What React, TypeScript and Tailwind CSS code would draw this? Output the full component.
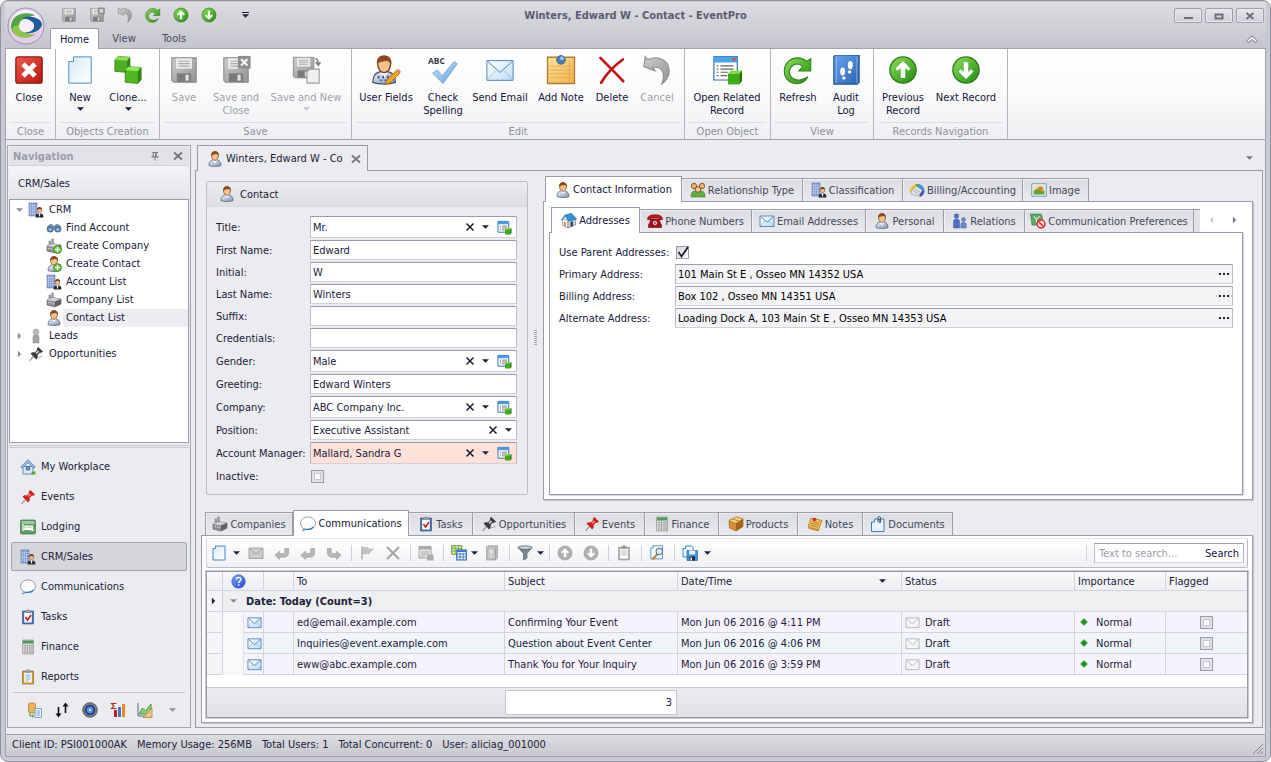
import type { ReactNode } from 'react';

/* ---------- Icon artwork, drawn on a 16 unit grid ---------- */
const person = (
  <g>
    <path d="M2 14.600c0-3.400 1.500-5.100 3.600-5.600h4.800c2.100.5 3.600 2.200 3.600 5.600-3 1.200-9 1.200-12 0z" fill="url(#shirt)" stroke="#46556f" strokeWidth=".7" />
    <path d="M6 9l2 3.500L10 9z" fill="#fbfcfd" />
    <path d="M4.500 4c0-2 1.500-3.400 3.500-3.400S11.500 2 11.500 4c0 3-1.400 5.400-3.500 5.400S4.500 7 4.500 4z" fill="#f3c08e" stroke="#7b4420" strokeWidth=".7" />
    <path d="M4.200 5C3.800 2 5.400.3 8 .3s4.200 1.700 3.800 4.700C11 4.200 10.600 3.400 9.600 3 8 3.600 5.400 3 4.200 5z" fill="#8a4b20" />
  </g>
);
const plus = (
  <g>
    <circle cx="11.500" cy="11.500" r="4" fill="#5cb82c" stroke="#3d8a16" strokeWidth=".6" />
    <path d="M11.500 9v5M9 11.500h5" stroke="#fff" strokeWidth="1.600" />
  </g>
);
const factory = (
  <g>
    <path d="M1 8l5-2.500 9 1.500v5l-6 3-8-2z" fill="#8d8f93" stroke="#55575b" strokeWidth=".6" />
    <path d="M1 8l5-2.500L15 7l-6 2.500z" fill="#cfd1d4" />
    <path d="M9 9.500V15l6-3V7z" fill="#5f6165" />
    <path d="M3 7V3h1.500v3.500M5.800 6V1h1.500v5" fill="#a3a5a9" stroke="#66686c" strokeWidth=".5" />
    <path d="M2.500 10.500h1.300M5 11h1.300M7.300 11.500h.8" stroke="#e8e8ea" />
  </g>
);
const building = (
  <g>
    <path d="M1 1h8v13H1z" fill="#7f98cb" stroke="#5a73a9" strokeWidth=".6" />
    <path d="M2.500 1.500v12M4.500 1.500v12M6.500 1.500v12M1 3.500h8M1 6h8M1 8.500h8M1 11h8" stroke="#c3d2ee" strokeWidth=".6" />
    <path d="M7.500 15.500c0-3 1.200-4.300 4-4.300s4 1.300 4 4.300z" fill="#2c2c30" />
    <path d="M10.400 11.200h2.200l-1.100 4z" fill="#fff" />
    <circle cx="11.500" cy="8.200" r="2.400" fill="#f3c08e" stroke="#7b4420" strokeWidth=".5" />
    <path d="M9 8c0-2 1-3 2.500-3s2.500 1 2.500 3c-1-1.300-3.500-1.500-5 0z" fill="#6d3f1d" />
  </g>
);
const calculator = (
  <g>
    <path d="M2.500 1h11v14h-11z" fill="#d4d6d6" stroke="#9a9d9d" strokeWidth=".8" />
    <path d="M3 1.500h10v3H3z" fill="#4c9a59" />
    <path d="M5 6v8M7.500 6v8M10 6v8M12 6v8" stroke="#7f8282" strokeWidth="1.100" strokeDasharray="1.200 1" />
  </g>
);
const clipboard = (board: string, rim: string, mark: ReactNode) => (
  <g>
    <path d="M2.500 2h11v13h-11z" fill={board} stroke={rim} strokeWidth=".6" />
    <path d="M4.200 3.500h7.600v10H4.200z" fill="#fff" />
    <path d="M5.500 3.500V2h1.300l.5-1.300h1.400L9.200 2h1.300v1.500z" fill="#9ea3ac" stroke="#74787f" strokeWidth=".5" />
    {mark}
  </g>
);
const pin = (dark: string, light: string) => (
  <g>
    <path d="M5.500 10.500L1.500 14.800" stroke="#9a9a9a" strokeWidth="1.200" />
    <path d="M2.500 7.500c1.500-1.400 3-1.500 4.200-1L9 4.200c-.4-1.300 0-2.500 1.200-3.300L15 5.500c-1 1.200-2.200 1.500-3.400 1.200L9.500 9.200c.6 1.500.2 2.900-1.300 4.200z" fill={dark} />
    <path d="M7.500 7l2.300-2.600L11.200 5.500 8.800 8z" fill={light} />
  </g>
);
const envelope = (fill: string, line: string, weight: number) => (
  <g>
    <path d="M1 3h14v10.500H1z" fill={fill} stroke={line} strokeWidth={weight} />
    <path d="M1.500 3.500L8 9.300l6.500-5.800" fill="none" stroke={line} strokeWidth={weight} />
    <path d="M1.500 13l4.700-5.200M14.500 13L9.800 7.800" fill="none" stroke={line} strokeWidth={weight * 0.6} opacity=".6" />
  </g>
);
const floppy = (
  <g>
    <path d="M1.500 1.500h13v13h-12l-1-1z" fill="url(#silver)" stroke="#8c8c8c" strokeWidth=".6" />
    <path d="M3.800 1.800h8.400v5.500H3.800z" fill="#ececec" />
    <path d="M5 3.300h6M5 4.600h6M5 5.900h6" stroke="#a8a8a8" strokeWidth=".6" />
    <path d="M4.200 9.800h7.600v4.500H4.200z" fill="#7b7b7b" />
    <path d="M8.800 10.500h1.700v3.200H8.800z" fill="#e0e0e0" />
  </g>
);
const record = (
  <g>
    <path d="M1 1.500h11.500V13H1z" fill="#fff" stroke="#2a6ab4" />
    <path d="M1 1.500h11.500v3H1z" fill="#4a9be6" />
    <path d="M3 6.500h1.200M5.300 6.500h5.500M3 8.500h1.200M5.300 8.500h5.500M3 10.500h1.200M5.300 10.500h3" stroke="#555" strokeWidth=".8" />
    <path d="M8.500 10l1.500-1.500h5.500L14 10z" fill="#7edb4a" />
    <path d="M8.500 10H14v5.500H8.500z" fill="#3fae16" />
    <path d="M14 10l1.500-1.500V14L14 15.500z" fill="#23750a" />
  </g>
);
const arrowBall = (up: boolean, fill: string, rim: string) => (
  <g>
    <circle cx="8" cy="8" r="7" fill={fill} stroke={rim} strokeWidth=".7" />
    <path
      d={up ? 'M8 3.200l4 4-1.200 1.200-1.600-1.500v5.300H6.800V6.900L5.200 8.400 4 7.200z' : 'M8 12.800l4-4-1.200-1.200-1.600 1.500V3.800H6.800v5.300L5.200 7.600 4 8.800z'}
      fill="#fff"
    />
  </g>
);
const reply = <path d="M.8 10.300L5.500 6.200v2.300H9c1.200 0 1.800-.6 1.800-1.700V3.500h3.700v4.300c0 3-1.700 4.400-4.500 4.400H5.500v2.200z" fill="#b8b8b8" stroke="#979797" strokeWidth=".6" />;
const page = (weight: number) => (
  <path d="M4.500 1h9.500v14H2V3.500h2.500z" fill="url(#paper)" stroke="#4a84c4" strokeWidth={weight} strokeLinejoin="round" />
);

const art: Record<string, ReactNode> = {
  person,
  building,
  factory,
  calculator,
  floppy,
  record,
  reply,
  replyAll: reply,
  forward: <g transform="translate(16 0) scale(-1 1)">{reply}</g>,
  undo: <path d="M1 6.200L1.700.9 3 2.400C7 .5 14.500 1.500 14.500 8.300c0 3.200-1.500 5.500-4 7.200 1.600-3.500 1.700-9.800-4.800-8.900L7 8.400z" fill="url(#silver)" stroke="#8f8f8f" strokeWidth=".6" />,
  refresh: <path d="M13.300 11.600C12 14 10 15.300 7.500 15.300 3.500 15.300.7 12.400.7 8.600.7 4.600 3.800 1.500 7.800 1.500c2 0 3.500.7 4.600 1.900L14.800 2v6.500H8.500l2-2.300C9 4.700 7 4.500 5.400 5.500 2.800 7.200 2.800 10.600 5 12.300c2.300 1.800 5.700 1.300 8.300-.7z" fill="url(#greenBall)" stroke="#2e8318" strokeWidth=".6" />,
  page: page(1),
  pageLarge: page(0.5),
  personPlus: <g>{person}{plus}</g>,
  factoryPlus: <g>{factory}{plus}</g>,
  floppyX: (
    <g>
      {floppy}
      <path d="M9 .5h6.800v6.800H9z" fill="#8e8e8e" />
      <path d="M10.700 2.200l3.400 3.400M14.100 2.200l-3.400 3.400" stroke="#f2f2f2" strokeWidth="1.200" />
    </g>
  ),
  floppyNew: (
    <g>
      <g transform="scale(.84)">{floppy}</g>
      <path d="M10 7.500h5V15H8.500V9z" fill="#f0f0f0" stroke="#9a9a9a" strokeWidth=".6" />
      <path d="M13 1.800c1.300.4 1.500 1.500 1.500 3M13.200 3.800l1.300 1.700 1.200-1.700" fill="none" stroke="#777" strokeWidth=".8" />
    </g>
  ),
  up: arrowBall(true, 'url(#greenBall)', '#2a7a12'),
  down: arrowBall(false, 'url(#greenBall)', '#2a7a12'),
  upGray: arrowBall(true, '#b0b0b0', '#999999'),
  downGray: arrowBall(false, '#b0b0b0', '#999999'),
  closeRed: (
    <g>
      <rect x="1" y="1" width="14" height="14" rx="1.200" fill="url(#redBox)" stroke="#8f1710" strokeWidth=".7" />
      <path d="M4.800 4.800l6.400 6.400M11.200 4.800l-6.400 6.400" stroke="#fff" strokeWidth="2.600" />
    </g>
  ),
  cubes: (
    <g strokeLinejoin="round">
      <path d="M1 2.500L2.800.8 9 1.200v6.300L7.500 9.300 1 8.700z" fill="#4fae24" stroke="#2d7d10" strokeWidth=".4" />
      <path d="M1 2.500L2.800.8 9 1.200 7.600 3z" fill="#8fe052" />
      <path d="M7.600 3L9 1.200v6.300L7.500 9.300z" fill="#2f8a10" />
      <path d="M6.500 8l1.700-1.800 6.800.5v6.400l-1.800 2.100-6.700-.7z" fill="#4fb822" stroke="#2d7d10" strokeWidth=".4" />
      <path d="M6.500 8l1.700-1.800 6.800.5-1.800 2z" fill="#98e65c" />
      <path d="M13.200 8.700l1.800-2v6.400l-1.800 2.100z" fill="#2f8a10" />
    </g>
  ),
  userFields: (
    <g>
      <g transform="translate(-1 0)">{person}</g>
      <path d="M4 11v1.500M6.500 11v1.500M9 11v1.500M5.200 13v1M7.700 13v1" stroke="#3e55a0" strokeWidth=".9" />
      <path d="M7.500 15.700l1-2.500L13.800 8l1.700 1.600-5.300 5.300z" fill="#f6a521" stroke="#a8650d" strokeWidth=".4" />
      <path d="M13.800 8l.8-.7 1.400 1.600-.5.700z" fill="#e67f7f" />
    </g>
  ),
  spelling: (
    <g>
      <path d="M2.500 9.700L5 8l2.500 3.200L14 3.400l1.600 1.300L8 15.200z" fill="url(#blueCheck)" stroke="#5f97cc" strokeWidth=".4" />
      <text x="0" y="5" fontSize="4.500" fontWeight="700" fontFamily="Open Sans, sans-serif" fill="#3b3b44">ABC</text>
    </g>
  ),
  envelope: envelope('url(#sky)', '#4a7fb8', 0.9),
  envelopeLarge: envelope('url(#sky)', '#4a7fb8', 0.5),
  envelopeGray: envelope('#cfcfcf', '#9e9e9e', 0.9),
  envelopePale: envelope('#f8f8f8', '#b0b0b4', 0.9),
  note: (
    <g>
      <path d="M.8 1.200h14.400v14H.8z" fill="url(#noteFill)" stroke="#b47a32" strokeWidth=".7" />
      <path d="M1.500 6h13M1.500 8h13M1.500 10h13M1.500 12h13M12.500 3v12" stroke="#dba64d" strokeWidth=".4" />
      <circle cx="8" cy="2.600" r="2.300" fill="#4a80b8" stroke="#2a5788" strokeWidth=".4" />
      <circle cx="8.500" cy="1.700" r="1" fill="#9cc3e4" />
    </g>
  ),
  deleteX: <path d="M1.800 1.500c4 4 8 8 12.200 12.500M13.800 2.400C9.500 5.500 5 10 2.200 14.800" stroke="#c0140f" strokeWidth="1.400" strokeLinecap="round" />,
  deleteGray: <path d="M2 2l12 12M14 2L2 14" stroke="#a5a5a5" strokeWidth="2" />,
  relatedRecord: (
    <g>
      <path d="M1 .8h12.500v12.500H1z" fill="#fff" stroke="#2a6ab4" strokeWidth=".6" />
      <path d="M1 .8h12.500V4H1z" fill="#4ba3ee" />
      <path d="M11 1.600h1.500v1.500H11z" fill="#e0442a" />
      <path d="M2.500 5.800h1M4.500 5.800h7M2.500 7.500h1M4.500 7.500h7M2.500 9.200h1M4.500 9.200h4M2.500 11h1M4.500 11h3.500" stroke="#666" strokeWidth=".6" />
      <path d="M8.500 10L10 8.200h6L14.500 10z" fill="#7edb4a" />
      <path d="M8.500 10h6v5.700h-6z" fill="#3fae16" />
      <path d="M14.500 10L16 8.200v5.600l-1.500 1.900z" fill="#23750a" />
    </g>
  ),
  audit: (
    <g>
      <path d="M1.500.8L2.500 0H15v14.500l-1 1H1.500z" fill="url(#bookBlue)" stroke="#1f4f92" strokeWidth=".6" />
      <path d="M2.800 1v14M13.800 1v14" stroke="#9cc2ee" strokeWidth=".4" />
      <ellipse cx="6.200" cy="8.800" rx="1.300" ry="2.200" fill="#fff" />
      <ellipse cx="10.300" cy="5.400" rx="1.300" ry="2.200" fill="#fff" />
      <circle cx="6.900" cy="12.300" r=".9" fill="#fff" />
      <circle cx="9.900" cy="9" r=".9" fill="#fff" />
    </g>
  ),
  binoculars: (
    <g stroke="#3f5d88" strokeWidth=".5">
      <path d="M2 6l3-2 2 1.500v1h2v-1L11 4l3 2 1 3.500H1z" fill="#7d9cc6" />
      <circle cx="4.200" cy="9" r="3.200" fill="#5a82b8" />
      <circle cx="11.800" cy="9" r="3.200" fill="#5a82b8" />
      <circle cx="4.200" cy="9.500" r="1.600" fill="#bcd9f5" />
      <circle cx="11.800" cy="9.500" r="1.600" fill="#bcd9f5" />
    </g>
  ),
  lead: (
    <g fill="#a5a5a5" stroke="#8a8a8a" strokeWidth=".5">
      <path d="M5 15V9c0-1.500 1-2.200 3-2.200s3 .7 3 2.200v6z" />
      <circle cx="8" cy="3.800" r="2.800" fill="#bcbcbc" />
    </g>
  ),
  pinBlack: <g>{pin('#3a3c40', '#d6d9dc')}<path d="M9.500 11.500l5-.8" stroke="#aaa" /></g>,
  pinRed: pin('#cf1f1c', '#ff8a80'),
  home: (
    <g>
      <path d="M3 7.500h10V15H3z" fill="#dfe9f4" stroke="#3c6594" strokeWidth=".7" />
      <path d="M8 .8L.8 8l1.400 1.200L8 3.700l5.800 5.500L15.200 8z" fill="#a9c9ea" stroke="#2f5c94" strokeWidth=".7" />
      <path d="M6.200 7.500h3.600V11H6.200z" fill="#5b93d0" stroke="#2b5690" strokeWidth=".6" />
      <path d="M11.500 12.500h4v3h-4z" fill="#5ba93a" />
    </g>
  ),
  bed: (
    <g>
      <rect x=".5" y="1" width="15" height="14" rx="1.200" fill="#5e9c64" stroke="#3e7547" strokeWidth=".7" />
      <path d="M1.500 2h13v3h-13z" fill="#9cc79f" />
      <path d="M3 5v7M3 10.500h10v1.500M5 7h7.500v2.500H5z" stroke="#fff" strokeWidth="1.200" fill="#c5e0c8" />
    </g>
  ),
  bubble: (
    <g>
      <path d="M8 1C3.800 1 .6 3.700.6 7.300c0 2.200 1 3.900 2.800 5-.1 1-.6 1.900-1.300 2.700 1.700-.2 3-.8 4-1.700 5 .8 9.300-1.700 9.300-6C15.400 3.700 12.200 1 8 1z" fill="#fdfdfe" stroke="#7d8794" strokeWidth=".8" />
      <path d="M3.500 12.800c2 .8 7.500 1.300 10-2" stroke="#2c78c8" strokeWidth="1.100" fill="none" />
    </g>
  ),
  tasks: clipboard('#3f6fb0', '#3a4e78', <path d="M5.500 8l2 3 3.500-5" stroke="#c9201c" strokeWidth="1.700" fill="none" />),
  reports: clipboard('#d9972a', '#8d6320', <path d="M5.500 6h5M5.500 8h5M5.500 10h5M5.500 12h3" stroke="#5b86c0" strokeWidth=".8" />),
  clipGray: clipboard('#b0b0b0', '#9a9a9a', <path d="M5.500 6h5M5.500 8h5M5.500 10h5" stroke="#b0b0b0" />),
  database: (
    <g>
      <path d="M1.500 2c0-1.300 7-1.300 7 0v8c0 1.200-7 1.200-7 0z" fill="#efb457" stroke="#a96d1b" strokeWidth=".7" />
      <path d="M8 6.500h6.500v9H8z" fill="#eaf2fb" stroke="#4a84c4" strokeWidth=".7" />
      <path d="M9.500 9h3.500M9.500 11h3.500M9.500 13h3.500" stroke="#4a84c4" strokeWidth=".7" />
      <path d="M3 11v3h3.500M5.200 12.500L6.800 14l-1.600 1.500" fill="none" stroke="#2d8d1c" strokeWidth=".9" />
    </g>
  ),
  swap: (
    <g>
      <path d="M4.500 5v8M11.500 11V3" stroke="#111" strokeWidth="1.600" />
      <path d="M1.500 11.500h6l-3 4zM8.500 4.500h6l-3-4z" fill="#111" />
    </g>
  ),
  camera: (
    <g>
      <circle cx="8" cy="8" r="7.300" fill="#7d828a" stroke="#33363b" strokeWidth=".7" />
      <circle cx="8" cy="8" r="5.200" fill="#1d3d7c" />
      <circle cx="8" cy="8" r="3.400" fill="#4f8be0" />
      <circle cx="8" cy="8" r="1.200" fill="#cfe6ff" />
    </g>
  ),
  sigma: (
    <g>
      <path d="M6.500 1.500H1.500L4 4 1.500 6.500h5" fill="none" stroke="#c0201a" strokeWidth="1.100" />
      <path d="M4 8h3v7H4z" fill="#c0201a" />
      <path d="M8 5h3v10H8z" fill="#3f76c6" />
      <path d="M12 2h3v13h-3z" fill="#f08a1c" />
    </g>
  ),
  chart: (
    <g>
      <path d="M1 1v13h14" stroke="#4d6f8e" fill="none" />
      <path d="M2 12l3.500-6 3 3L14 2v10z" fill="#8fce7a" stroke="#2d8d1c" strokeWidth=".8" />
      <path d="M15 6v9.500H6z" fill="#f2cf8a" stroke="#a8741f" strokeWidth=".7" />
      <path d="M13 10.500V14H9.800z" fill="#fff" stroke="#a8741f" strokeWidth=".4" />
    </g>
  ),
  people: (
    <g>
      <path d="M1 15c0-3 .8-6 3.500-6h7c2.700 0 3.500 3 3.500 6z" fill="#62ad44" stroke="#3c7a25" strokeWidth=".6" />
      <circle cx="4" cy="4" r="2.600" fill="#e9b683" stroke="#8a5426" strokeWidth="1" />
      <circle cx="12" cy="4" r="2.600" fill="#e9b683" stroke="#8a5426" strokeWidth="1" />
      <circle cx="8" cy="7.500" r="2.800" fill="#f3c793" stroke="#8a5426" strokeWidth="1" />
    </g>
  ),
  billing: (
    <g>
      <path d="M.5 10.500C1 5.500 4 2.200 8.500 2L9 6z" fill="#f7c21c" />
      <path d="M8.500 2c4 .2 7 3 7 6.500L9 7z" fill="#3f94dd" />
      <path d="M9 7l6.500 1.500c0 3-1.500 5.200-4 6z" fill="#2b62c8" />
      <path d="M6 3c1-.7 2-1 3-1l.8 3z" fill="#3f9c2f" />
      <path d="M10.500 11l2 3-2 1z" fill="#d8261c" />
      <path d="M2 9.500L7 4l6.500 4.200-4.500 6.300L2 12z" fill="#dfe3e9" stroke="#8c929c" strokeWidth=".6" />
      <path d="M4.500 9l5 3M6 7.200l5 3" stroke="#9aa1ac" strokeWidth=".8" />
    </g>
  ),
  picture: (
    <g>
      <path d="M.8 1.800h14.400v12.400H.8z" fill="#f5faff" stroke="#4a7fc0" strokeWidth=".8" />
      <path d="M2.500 3.500h11v9h-11z" fill="#f4dc8e" />
      <path d="M2.500 9l4-2.500 3.500 3 3.500-1v4h-11z" fill="#64a43c" />
      <circle cx="9.500" cy="7" r="2.300" fill="#d8862a" stroke="#85501a" strokeWidth=".6" strokeDasharray="1 .6" />
    </g>
  ),
  house: (
    <g>
      <path d="M1.500 6l5.500 1v8l-5.500-2.500z" fill="#f6f7f9" stroke="#70757d" strokeWidth=".6" />
      <path d="M7 7l7.500-1.500V12L7 15z" fill="#c9ced6" stroke="#70757d" strokeWidth=".6" />
      <path d="M.3 7.200L4 2l6.500-1.700L15.700 6 8 8.200 4.500 3.600z" fill="#2f8fd8" stroke="#1a5f9c" strokeWidth=".5" />
      <path d="M3 9h1.800v4.500L3 12.700z" fill="#d48a2a" />
      <path d="M9.500 9l2.500-.7v4.700l-2.500 1z" fill="#3e4247" />
    </g>
  ),
  phone: (
    <g>
      <path d="M.5 6.500C.5 3 3.500 1.800 8 1.800S15.500 3 15.500 6.500L12 7.200V5H4v2.200z" fill="#c4161c" stroke="#6e0a0d" strokeWidth=".6" />
      <path d="M4.500 6h7l3 6v2.500h-13V12z" fill="#a80f15" stroke="#6e0a0d" strokeWidth=".6" />
      <circle cx="8" cy="10" r="2.400" fill="#fff" stroke="#5c0b0e" strokeWidth=".7" />
      <circle cx="8" cy="10" r=".9" fill="#a80f15" />
    </g>
  ),
  relations: (
    <g fill="#4d6fc6" stroke="#2f4a9c" strokeWidth=".4">
      <circle cx="4.500" cy="3" r="2.300" />
      <path d="M1.500 15V8.500C1.500 6.800 2.500 6 4.500 6s3 .8 3 2.500V15z" />
      <circle cx="11.500" cy="6.500" r="2" fill="#6a88d8" />
      <path d="M8.800 15v-3.500c0-1.500 1-2.200 2.700-2.200s2.700.7 2.700 2.200V15z" fill="#6a88d8" />
    </g>
  ),
  commPrefs: (
    <g>
      <path d="M.5 1h10.500l1.500 4-2 7H2z" fill="#5fa868" stroke="#2f6f3a" strokeWidth=".6" />
      <path d="M4 3.500l2.500 3 3-3.500M6.500 6.500V10" stroke="#dff2e0" strokeWidth="1.100" fill="none" />
      <circle cx="11" cy="11" r="4" fill="#fbe3e4" stroke="#dc1f26" strokeWidth="1.400" />
      <path d="M8.200 8.200l5.600 5.600" stroke="#dc1f26" strokeWidth="1.400" />
    </g>
  ),
  box: (
    <g strokeLinejoin="round">
      <path d="M1 4.500L8.500 1 15 3v7.500L8 15l-6.500-3z" fill="#d68f2c" stroke="#8c5511" strokeWidth=".6" />
      <path d="M1 4.500L8.500 1 15 3 8 7.300z" fill="#f8d58a" stroke="#8c5511" strokeWidth=".4" />
      <path d="M8 7.300L15 3v7.500L8 15z" fill="#a9661a" />
      <path d="M4.500 3l7 2.200v2" stroke="#c17c1f" fill="none" />
    </g>
  ),
  notes: (
    <g>
      <path d="M4 2l11 2.500L11.500 14 1 11z" fill="#eebb58" stroke="#a3701f" strokeWidth=".7" />
      <path d="M1 11l10.500 3 .3 1.500L2 13z" fill="#c88d31" />
      <path d="M4.800 5.500l7.500 1.800M4.200 7.300l7.500 2M3.500 9.200l7 2" stroke="#a3701f" strokeWidth=".7" />
      <circle cx="7.500" cy="3.500" r="1.800" fill="#c4302a" />
    </g>
  ),
  document: (
    <g>
      <path d="M4.500 3H14v12.500H1.500V6h3z" fill="#eaf4fd" stroke="#3a7cc0" strokeLinejoin="round" />
      <path d="M8 6V1.500c0-1.300 2.600-1.300 2.600 0V6c0 1-1.500 1-1.500 0V3" fill="none" stroke="#33475e" strokeWidth=".9" />
    </g>
  ),
  flag: (
    <g>
      <path d="M3 1.500v13" stroke="#a5a5a5" strokeWidth="1.300" />
      <path d="M4 2.500h4.500L10 4h4.500L12 6.200l-2 2.500H4z" fill="#c2c2c2" stroke="#a8a8a8" strokeWidth=".5" />
    </g>
  ),
  recordGray: (
    <g>
      <path d="M1 1.500h12V13H1z" fill="#e4e4e4" stroke="#a2a2a2" />
      <path d="M1 1.500h12v3H1z" fill="#adadad" />
      <path d="M3 7h8M3 9h8M3 11h4" stroke="#a2a2a2" strokeWidth=".8" />
      <path d="M9 9.500h6.500v6H9z" fill="#adadad" />
    </g>
  ),
  tables: (
    <g>
      <path d="M.8.8h10v8.500h-10z" fill="#e9f5d8" stroke="#5c9c1e" strokeWidth="1.100" />
      <path d="M1 3.300h10M4 1v8M7.500 1v8M1 6h10" stroke="#5c9c1e" strokeWidth=".8" />
      <path d="M5.800 5h9.500v10H5.800z" fill="#e3effb" stroke="#2a66b4" strokeWidth="1.100" />
      <path d="M6 9h9M6 12h9M9 8v7M12.200 8v7" stroke="#2a66b4" strokeWidth=".7" />
      <path d="M6 5h9v2H6z" fill="#3b7cc8" />
    </g>
  ),
  bookGray: (
    <g>
      <path d="M2.500 2l2-1.300h9V13l-2 2h-9z" fill="#bcbcbc" stroke="#9f9f9f" strokeWidth=".7" />
      <path d="M5 4h4.500v8H5z" stroke="#e8e8e8" strokeWidth=".6" />
      <path d="M7.200 5v4M7.200 10v1.300" stroke="#fff" strokeWidth="1.400" />
      <path d="M11.500 3v12" stroke="#979797" strokeWidth=".7" />
    </g>
  ),
  funnel: (
    <g>
      <path d="M1 2.500l5.500 6V15l3.500-1.700V8.500L15 2.500z" fill="#7d8895" stroke="#4a535e" strokeWidth=".6" />
      <ellipse cx="8" cy="2.600" rx="7" ry="1.800" fill="#c8d4e0" stroke="#4a535e" strokeWidth=".7" />
    </g>
  ),
  preview: (
    <g>
      <path d="M4 .8h9.500v13H1.800V3H4z" fill="#f2f8fe" stroke="#3a7cc0" strokeWidth=".8" />
      <path d="M8.200 9.200L3.500 14.500" stroke="#c58a2c" strokeWidth="2.200" />
      <circle cx="10.300" cy="6.500" r="3.300" fill="#d6ebfb" stroke="#55606e" />
    </g>
  ),
  exportFile: (
    <g>
      <path d="M1 3.500h2.500V1h6l1.500 1.500V12H1z" fill="#f2f8fe" stroke="#2f86d0" />
      <path d="M5 5.500h10.500v10H5z" fill="#3f96e0" stroke="#1c5e9c" strokeWidth=".6" />
      <path d="M7.200 5.500h6v4h-6z" fill="#eaf4fd" />
      <path d="M7.500 11.500h5.500v4H7.500z" fill="#222c38" />
      <path d="M8.500 12.500h1.500v3H8.500z" fill="#fff" />
    </g>
  ),
  help: (
    <g>
      <circle cx="8" cy="8" r="7.200" fill="url(#helpBall)" stroke="#1c3fb8" strokeWidth=".5" />
      <path d="M5.600 6c.2-3.200 5-3 4.900-.2 0 1.700-2.300 1.900-2.300 3.700M8.200 11v1.600" stroke="#fff" strokeWidth="1.600" fill="none" />
    </g>
  ),
  diamond: <path d="M8 4.500L11.500 8 8 11.500 4.500 8z" fill="#1f8c1f" stroke="#5cb85c" strokeWidth=".8" />,
  clear: <path d="M4.500 4.500l7 7M11.500 4.500l-7 7" stroke="#1c1c30" strokeWidth="1.500" />,
  thinX: <path d="M4 4.500l8 7M12 4.500l-8 7" stroke="#777886" strokeWidth="2" />,
  pushpin: <path d="M5 4h6.500M6 4v5M9.500 4v5M8.800 4v5M4 9h8M8 9v4" stroke="#777886" strokeWidth="1.200" />,
};

function Icon({ name, className = 'size-4' }: { name: string; className?: string }) {
  return (
    <svg viewBox="0 0 16 16" className={`${className} shrink-0`} fill="none" aria-hidden="true">
      {art[name]}
    </svg>
  );
}

function Caret({ className = 'text-[#20203a]' }: { className?: string }) {
  return (
    <svg viewBox="0 0 8 4" className={`h-1 w-[7px] shrink-0 ${className}`} aria-hidden="true">
      <path d="M0 0h8L4 4z" fill="currentColor" />
    </svg>
  );
}

function Gradients() {
  const lin = (id: string, a: string, b: string) => (
    <linearGradient id={id} x1="0" y1="0" x2="1" y2="1">
      <stop offset="0" stopColor={a} />
      <stop offset="1" stopColor={b} />
    </linearGradient>
  );
  return (
    <svg className="absolute size-0" aria-hidden="true">
      <defs>
        {lin('shirt', '#eef2f7', '#7d93b3')}
        {lin('silver', '#cdcdcd', '#929292')}
        {lin('greenBall', '#8ee05a', '#1f8a12')}
        {lin('paper', '#d8eafb', '#ffffff')}
        {lin('redBox', '#ef5a48', '#b8180f')}
        {lin('blueCheck', '#d3e8fa', '#5b9edb')}
        {lin('sky', '#ffffff', '#bcdcf6')}
        {lin('noteFill', '#fbe29a', '#f3b24c')}
        {lin('bookBlue', '#6aa6ee', '#2a62b8')}
        {lin('helpBall', '#7fa4ff', '#1f48dc')}
      </defs>
    </svg>
  );
}

/* ---------- Ribbon ---------- */
type RibbonButton = { icon: string; lines: string[]; width: string; off?: boolean; drop?: boolean };

const ribbon: { title: string; width: string; buttons: RibbonButton[] }[] = [
  { title: 'Close', width: 'w-[50px]', buttons: [{ icon: 'closeRed', lines: ['Close'], width: 'w-[46px]' }] },
  {
    title: 'Objects Creation',
    width: 'w-[104px]',
    buttons: [
      { icon: 'pageLarge', lines: ['New'], width: 'w-12', drop: true },
      { icon: 'cubes', lines: ['Clone...'], width: 'w-12', drop: true },
    ],
  },
  {
    title: 'Save',
    width: 'w-48',
    buttons: [
      { icon: 'floppy', lines: ['Save'], width: 'w-12', off: true },
      { icon: 'floppyX', lines: ['Save and', 'Close'], width: 'w-14', off: true },
      { icon: 'floppyNew', lines: ['Save and New'], width: 'w-[84px]', off: true, drop: true },
    ],
  },
  {
    title: 'Edit',
    width: 'w-[333px]',
    buttons: [
      { icon: 'userFields', lines: ['User Fields'], width: 'w-[68px]' },
      { icon: 'spelling', lines: ['Check', 'Spelling'], width: 'w-[46px]' },
      { icon: 'envelopeLarge', lines: ['Send Email'], width: 'w-[68px]' },
      { icon: 'note', lines: ['Add Note'], width: 'w-[54px]' },
      { icon: 'deleteX', lines: ['Delete'], width: 'w-12' },
      { icon: 'undo', lines: ['Cancel'], width: 'w-[42px]', off: true },
    ],
  },
  {
    title: 'Open Object',
    width: 'w-[86px]',
    buttons: [{ icon: 'relatedRecord', lines: ['Open Related', 'Record'], width: 'w-[84px]' }],
  },
  {
    title: 'View',
    width: 'w-[103px]',
    buttons: [
      { icon: 'refresh', lines: ['Refresh'], width: 'w-[54px]' },
      { icon: 'audit', lines: ['Audit', 'Log'], width: 'w-[42px]' },
    ],
  },
  {
    title: 'Records Navigation',
    width: 'w-[134px]',
    buttons: [
      { icon: 'up', lines: ['Previous', 'Record'], width: 'w-[58px]' },
      { icon: 'down', lines: ['Next Record'], width: 'w-[68px]' },
    ],
  },
];

function TitleBar() {
  const quick = ['floppy', 'floppyX', 'undo', 'refresh', 'up', 'down'];
  return (
    <header className="relative bg-linear-to-b from-[#dcdce1] to-[#c5c5ce]">
      <button aria-label="Application menu" className="absolute top-[5px] left-0.5 size-[38px]">
        <svg viewBox="0 0 38 38" className="size-full">
          <circle cx="19" cy="19" r="18" fill="#e6cdec" stroke="#9294a8" />
          <path d="M3 19a16 16 0 0 1 32 0c-10-5-22-5-32 0z" fill="#f8f2fb" />
          <path d="M28 8C16 3 4 9 4 19c0 4 2 7 5 9 0-8 6-16 19-20z" fill="#4fa548" />
          <path d="M5 22c2 9 14 12 24 5-9 1-16-2-17-9-3 0-6 1-7 4z" fill="#8fc64a" />
          <path d="M15 11c9-3 20 0 20 7-2 6-9 9-18 8 6-1 10-3 10-7s-5-7-12-8z" fill="#1d5c9e" />
          <path d="M12 19c0-4 3-7 6-7 5 1 9 3 9 7s-4 6-9 6c-3 0-6-2-6-6z" fill="#f6eef9" />
        </svg>
      </button>
      <div className="grid h-[26px] grid-cols-[1fr_auto_1fr] items-center">
        <div className="flex items-center pl-[50px]">
          {quick.map((name) => (
            <button key={name} aria-label={name} className="flex w-7 justify-center">
              <Icon name={name} />
            </button>
          ))}
          <button aria-label="Customize quick access" className="flex w-11 flex-col items-center gap-px">
            <span className="h-px w-[7px] bg-[#20203a]" />
            <Caret />
          </button>
        </div>
        <h1 className="font-bold text-[#5b5c72]">Winters, Edward W - Contact - EventPro</h1>
        <div className="flex justify-end gap-[3px] pr-0.5">
          {['M9 9h9', 'M9.500 5.500h7v4h-7z', 'M9.500 4l7 6M16.500 4l-7 6'].map((d, i) => (
            <button
              key={d}
              aria-label={['Minimize', 'Maximize', 'Close'][i]}
              className="h-[15px] w-7 rounded-xs border border-[#9fa0ae] bg-linear-to-b from-[#e6e6ea] to-[#cfd0d7] shadow-[inset_0_0_0_1px_#e8e8ec]"
            >
              <svg viewBox="0 0 26 13" className="h-[13px] w-[26px]">
                <path d={d} stroke="#6d6e80" strokeWidth="2" fill="none" />
              </svg>
            </button>
          ))}
        </div>
      </div>
      <nav className="flex items-end pl-[45px] text-[#4a4b60]">
        <button className="z-10 -mb-px h-[21px] w-[49px] rounded-t-xs border border-b-0 border-[#9b9cab] bg-white text-[#16163a]">Home</button>
        <button className="h-5 w-[50px]">View</button>
        <button className="h-5 w-[50px]">Tools</button>
        <button aria-label="Collapse ribbon" className="mr-2 mb-1 ml-auto">
          <svg viewBox="0 0 12 9" className="h-[9px] w-3">
            <path d="M1 5.500l5-4.500 5 4.500-1.500 2L6 4.500l-3.500 3z" fill="#f4f4f7" stroke="#77788a" />
          </svg>
        </button>
      </nav>
    </header>
  );
}

function Ribbon() {
  return (
    <div className="flex h-[92px] border border-[#a2a3b1] bg-linear-to-b from-white via-[#fafafb] to-[#eeeff2]">
      {ribbon.map((group) => (
        <section key={group.title} className={`${group.width} flex shrink-0 flex-col border-r border-[#b3b4c0] text-[#16163a]`}>
          <div className="flex h-[73px] pt-1.5">
            {group.buttons.map((b) => (
              <button
                key={b.lines[0]}
                disabled={b.off}
                className={`${b.width} flex shrink-0 flex-col items-center whitespace-nowrap ${b.off ? 'text-[#a0a1ab]' : ''}`}
              >
                <Icon name={b.icon} className="size-[30px]" />
                <span className="mt-1.5">
                  {b.lines.map((line) => (
                    <span key={line} className="block">{line}</span>
                  ))}
                </span>
                {b.drop && <Caret className={b.off ? 'mt-[3px] text-[#c4c5cc]' : 'mt-[3px]'} />}
              </button>
            ))}
          </div>
          <h2 className="mx-1 grow border-t border-[#dddee3] pt-0.5 text-center whitespace-nowrap text-[#8f909c]">{group.title}</h2>
        </section>
      ))}
    </div>
  );
}

/* ---------- Navigation pane ---------- */
const tree = [
  { icon: 'binoculars', label: 'Find Account' },
  { icon: 'factoryPlus', label: 'Create Company' },
  { icon: 'personPlus', label: 'Create Contact' },
  { icon: 'building', label: 'Account List' },
  { icon: 'factory', label: 'Company List' },
  { icon: 'person', label: 'Contact List' },
];

const modules = [
  { icon: 'home', label: 'My Workplace' },
  { icon: 'pinRed', label: 'Events' },
  { icon: 'bed', label: 'Lodging' },
  { icon: 'building', label: 'CRM/Sales' },
  { icon: 'bubble', label: 'Communications' },
  { icon: 'tasks', label: 'Tasks' },
  { icon: 'calculator', label: 'Finance' },
  { icon: 'reports', label: 'Reports' },
];

function Navigation() {
  return (
    <aside className="flex w-[184px] shrink-0 flex-col border border-[#a2a3b1] bg-[#ebecef] p-px">
      <div className="flex h-[19px] items-center border-b border-[#d3d4da] bg-[#e2e3e8] pl-1">
        <h2 className="grow font-bold text-[#9c9daa]">Navigation</h2>
        <button aria-label="Pin" className="flex w-6 justify-center"><Icon name="pushpin" className="size-3.5" /></button>
        <button aria-label="Close pane" className="flex w-[22px] justify-center"><Icon name="thinX" /></button>
      </div>
      <h3 className="bg-linear-to-b from-[#f3f4f6] to-[#e4e5e9] px-[9px] pt-[11px] pb-[9px]">CRM/Sales</h3>
      <ul className="grow border border-[#9b9cab] bg-white pt-px leading-[18px]">
        <li>
          <div className="flex items-center gap-[5px] pl-1.5">
            <Caret className="text-[#8a8b98]" />
            <Icon name="building" />
            CRM
          </div>
          <ul>
            {tree.map((t) => (
              <li key={t.label} className="flex items-center gap-px pl-9">
                <Icon name={t.icon} />
                <a href="#" className={`grow pl-[3px] ${t.label === 'Contact List' ? 'bg-[#edeef1]' : ''}`}>{t.label}</a>
              </li>
            ))}
          </ul>
        </li>
        {[['lead', 'Leads'], ['pinBlack', 'Opportunities']].map(([icon, label]) => (
          <li key={label} className="flex items-center gap-[5px] pl-1.5">
            <Caret className="-rotate-90 text-[#8a8b98]" />
            <Icon name={icon} />
            {label}
          </li>
        ))}
      </ul>
      <div className="my-0.5 h-[3px] border-y border-[#c6c7cf]" />
      <nav className="flex flex-col gap-px px-0.5 pt-0.5 pb-px">
        {modules.map((m) => (
          <a
            key={m.label}
            href="#"
            className={`flex h-[29px] items-center gap-[5px] rounded-xs border pl-2 ${
              m.label === 'CRM/Sales' ? 'border-[#a2a3b1] bg-[#d5d6db]' : 'border-transparent'
            }`}
          >
            <Icon name={m.icon} />
            {m.label}
          </a>
        ))}
      </nav>
      <div className="mx-1 flex h-[34px] items-center border-t border-[#c3c4cc] pl-2">
        {['database', 'swap', 'camera', 'sigma', 'chart'].map((name) => (
          <button key={name} aria-label={name} className="flex w-7 justify-center">
            <Icon name={name} />
          </button>
        ))}
        <button aria-label="Configure buttons" className="flex w-[26px] justify-center">
          <Caret className="text-[#8a8b98]" />
        </button>
      </div>
    </aside>
  );
}

/* ---------- Contact form ---------- */
type Field = { id: string; label: string; value: string; kind?: 'lookup' | 'combo'; required?: boolean };

const fields: Field[] = [
  { id: 'title', label: 'Title:', value: 'Mr.', kind: 'lookup' },
  { id: 'first', label: 'First Name:', value: 'Edward' },
  { id: 'initial', label: 'Initial:', value: 'W' },
  { id: 'last', label: 'Last Name:', value: 'Winters' },
  { id: 'suffix', label: 'Suffix:', value: '' },
  { id: 'credentials', label: 'Credentials:', value: '' },
  { id: 'gender', label: 'Gender:', value: 'Male', kind: 'lookup' },
  { id: 'greeting', label: 'Greeting:', value: 'Edward Winters' },
  { id: 'company', label: 'Company:', value: 'ABC Company Inc.', kind: 'lookup' },
  { id: 'position', label: 'Position:', value: 'Executive Assistant', kind: 'combo' },
  { id: 'manager', label: 'Account Manager:', value: 'Mallard, Sandra G', kind: 'lookup', required: true },
];

const box = 'border border-[#b9bac6] border-t-[#9b9cab] border-b-[#d0d1d9]';
const check =
  'size-[13px] appearance-none border border-[#9b9cab] bg-white shadow-[inset_0_0_0_2px_#e0e1e6,inset_0_0_0_3px_#c4c5cf]';

function FormField({ id, label, value, kind, required }: Field) {
  return (
    <div className={`flex items-center ${kind === 'lookup' ? 'h-[22px]' : 'h-5'}`}>
      <label htmlFor={id} className="w-[94px] shrink-0 whitespace-nowrap">{label}</label>
      {kind ? (
        <div className={`flex h-full min-w-0 grow items-center ${box} ${required ? 'bg-[#ffe1da]' : 'bg-white'}`}>
          <div className="relative flex h-full min-w-0 grow items-center">
            <select id={id} defaultValue={value} className="h-full w-full appearance-none pl-0.5">
              <option>{value}</option>
            </select>
            <button aria-label={`Clear ${label}`} className="absolute right-[15px]"><Icon name="clear" /></button>
            <span className="pointer-events-none absolute right-1 flex"><Caret /></span>
          </div>
          {kind === 'lookup' && (
            <button aria-label={`Open ${label}`} className="flex w-[23px] justify-center"><Icon name="record" className="size-[15px]" /></button>
          )}
        </div>
      ) : (
        <input id={id} defaultValue={value} className={`h-full min-w-0 grow bg-white pl-0.5 ${box}`} />
      )}
    </div>
  );
}

function ContactForm() {
  return (
    <section className="mt-[5px] mb-[5px] w-[322px] shrink-0 self-start rounded-xs border border-[#bcbdc8]">
      <h2 className="flex h-[25px] items-center gap-[5px] border-b border-[#dcdde2] bg-linear-to-b from-[#eaebee] to-[#dfe0e4] pl-3">
        <Icon name="person" />
        Contact
      </h2>
      <div className="flex flex-col gap-0.5 pt-[9px] pr-2.5 pb-2 pl-[9px]">
        {fields.map((f) => (
          <FormField key={f.id} {...f} />
        ))}
        <div className="flex h-5 items-center">
          <label htmlFor="inactive" className="w-[95px]">Inactive:</label>
          <input id="inactive" type="checkbox" className={check} />
        </div>
      </div>
    </section>
  );
}

/* ---------- Tab strips ---------- */
type Tab = { icon: string; label: string; width: string };

function TabStrip({ tabs, active, className = '' }: { tabs: Tab[]; active: string; className?: string }) {
  return (
    <div role="tablist" className={`relative z-10 -mb-px flex h-[26px] items-end overflow-hidden ${className}`}>
      {tabs.map((t) => (
        <button
          key={t.label}
          role="tab"
          aria-selected={t.label === active}
          className={`${t.width} flex shrink-0 items-center justify-center gap-0.5 overflow-hidden border-[#9b9cab] whitespace-nowrap ${
            t.label === active
              ? 'h-[26px] border border-b-0 bg-white text-[#16163a]'
              : 'h-6 border-y border-r bg-linear-to-b from-[#dcdde2] to-[#e9eaed] text-[#45465c] shadow-[inset_1px_1px_0_#f1f1f4] first:border-l'
          }`}
        >
          <Icon name={t.icon} />
          {t.label}
        </button>
      ))}
    </div>
  );
}

const infoTabs: Tab[] = [
  { icon: 'person', label: 'Contact Information', width: 'w-[137px]' },
  { icon: 'people', label: 'Relationship Type', width: 'w-[121px]' },
  { icon: 'building', label: 'Classification', width: 'w-[100px]' },
  { icon: 'billing', label: 'Billing/Accounting', width: 'w-[120px]' },
  { icon: 'picture', label: 'Image', width: 'w-[66px]' },
];

const detailTabs: Tab[] = [
  { icon: 'house', label: 'Addresses', width: 'w-[89px]' },
  { icon: 'phone', label: 'Phone Numbers', width: 'w-[112px]' },
  { icon: 'envelope', label: 'Email Addresses', width: 'w-[114px]' },
  { icon: 'person', label: 'Personal', width: 'w-[78px]' },
  { icon: 'relations', label: 'Relations', width: 'w-[81px]' },
  { icon: 'commPrefs', label: 'Communication Preferences', width: 'w-[169px]' },
];

const recordTabs: Tab[] = [
  { icon: 'factory', label: 'Companies', width: 'w-[88px]' },
  { icon: 'bubble', label: 'Communications', width: 'w-[116px]' },
  { icon: 'tasks', label: 'Tasks', width: 'w-16' },
  { icon: 'pinBlack', label: 'Opportunities', width: 'w-[102px]' },
  { icon: 'pinRed', label: 'Events', width: 'w-[70px]' },
  { icon: 'calculator', label: 'Finance', width: 'w-[74px]' },
  { icon: 'box', label: 'Products', width: 'w-[79px]' },
  { icon: 'notes', label: 'Notes', width: 'w-[65px]' },
  { icon: 'document', label: 'Documents', width: 'w-[90px]' },
];

const addresses = [
  { id: 'primary', label: 'Primary Address:', value: '101 Main St E , Osseo MN 14352 USA' },
  { id: 'billing', label: 'Billing Address:', value: 'Box 102 , Osseo MN 14351 USA' },
  { id: 'alternate', label: 'Alternate Address:', value: 'Loading Dock A, 103 Main St E , Osseo MN 14353 USA' },
];

function ContactInformation() {
  return (
    <section className="flex min-w-0 grow flex-col">
      <TabStrip tabs={infoTabs} active="Contact Information" className="ml-0.5" />
      <div className="flex grow flex-col border border-[#9b9cab] bg-white pt-[5px] pr-[9px] pb-1 pl-[5px] shadow-[1px_1px_1px_#c6c7cf]">
        <div className="flex items-center">
          <div className="flex w-[653px] min-w-0">
            <TabStrip tabs={detailTabs} active="Addresses" className="ml-0.5" />
            <span className="mt-0.5 h-[23px] w-1.5 border-t border-[#9b9cab] bg-[#e2e3e8]" />
          </div>
          <button aria-label="Scroll left" className="ml-1.5"><Caret className="rotate-90 text-[#c9cad2]" /></button>
          <button aria-label="Scroll right" className="ml-4"><Caret className="-rotate-90 text-[#77788a]" /></button>
        </div>
        <div className="flex grow flex-col gap-0.5 border border-[#9b9cab] px-[9px] pt-[9px] shadow-[1px_1px_1px_#d6d7de]">
          <div className="flex h-5 items-center">
            <label htmlFor="parent" className="w-[117px] whitespace-nowrap">Use Parent Addresses:</label>
            <span className="relative flex">
              <input id="parent" type="checkbox" defaultChecked className="size-[13px] appearance-none border border-[#9b9cab] bg-linear-to-br from-[#d5d6dc] to-white" />
              <svg viewBox="0 0 13 13" className="pointer-events-none absolute size-[13px]">
                <path d="M2.500 6l3 4.500L12 1" stroke="#20202c" strokeWidth="1.800" fill="none" />
              </svg>
            </span>
          </div>
          {addresses.map((a) => (
            <div key={a.id} className="flex h-5 items-center">
              <label htmlFor={a.id} className="w-[116px] shrink-0 whitespace-nowrap">{a.label}</label>
              <div className={`flex h-full grow items-center bg-[#f4f4f6] ${box}`}>
                <input id={a.id} readOnly defaultValue={a.value} className="h-full min-w-0 grow bg-transparent pl-0.5 text-black" />
                <button aria-label={`Edit ${a.label}`} className="flex gap-0.5 px-[3px]">
                  <span className="size-0.5 bg-[#20203a]" />
                  <span className="size-0.5 bg-[#20203a]" />
                  <span className="size-0.5 bg-[#20203a]" />
                </button>
              </div>
            </div>
          ))}
        </div>
      </div>
    </section>
  );
}

/* ---------- Communications list ---------- */
// an entry without an icon is a separator
const tools: { icon?: string; width: string; drop?: boolean }[] = [
  { icon: 'page', width: 'w-[37px]', drop: true },
  { icon: 'envelopeGray', width: 'w-[26px]' },
  { icon: 'reply', width: 'w-[26px]' },
  { icon: 'replyAll', width: 'w-[26px]' },
  { icon: 'forward', width: 'w-[26px]' },
  { width: 'w-[7px]' },
  { icon: 'flag', width: 'w-[26px]' },
  { icon: 'deleteGray', width: 'w-[26px]' },
  { width: 'w-[7px]' },
  { icon: 'recordGray', width: 'w-[26px]' },
  { width: 'w-[7px]' },
  { icon: 'tables', width: 'w-[33px]', drop: true },
  { icon: 'bookGray', width: 'w-[26px]' },
  { width: 'w-[7px]' },
  { icon: 'funnel', width: 'w-[33px]', drop: true },
  { width: 'w-[7px]' },
  { icon: 'upGray', width: 'w-[26px]' },
  { icon: 'downGray', width: 'w-[26px]' },
  { width: 'w-[7px]' },
  { icon: 'clipGray', width: 'w-[26px]' },
  { width: 'w-[7px]' },
  { icon: 'preview', width: 'w-[26px]' },
  { width: 'w-[7px]' },
  { icon: 'exportFile', width: 'w-[37px]', drop: true },
];

const messages = [
  { to: 'ed@email.example.com', subject: 'Confirming Your Event', date: 'Mon Jun 06 2016 @ 4:11 PM' },
  { to: 'Inquiries@event.example.com', subject: 'Question about Event Center', date: 'Mon Jun 06 2016 @ 4:06 PM' },
  { to: 'eww@abc.example.com', subject: 'Thank You for Your Inquiry', date: 'Mon Jun 06 2016 @ 3:59 PM' },
];

function Toolbar() {
  return (
    <div className="flex h-[30px] items-center rounded-xs border border-t-[#e3e4e8] border-r-[#b9bac6] border-b-[#b9bac6] border-l-[#d5d6dc] bg-linear-to-b from-white to-[#f0f0f3]">
      {tools.map((t, i) =>
        t.icon ? (
          <button key={i} aria-label={t.icon} className={`${t.width} flex shrink-0 items-center pl-1`}>
            <Icon name={t.icon} />
            {t.drop && <Caret className={t.width === 'w-[37px]' ? 'ml-1.5' : 'ml-1'} />}
          </button>
        ) : (
          <span key={i} className={`${t.width} flex shrink-0 justify-center`}>
            <span className="h-4 w-px bg-[#cfd0d7]" />
          </span>
        ),
      )}
      <span className="mr-[7px] ml-auto h-4 w-px bg-[#cfd0d7]" />
      <div className={`mr-[3px] flex h-5 w-[150px] items-center bg-white ${box}`}>
        <input aria-label="Text to search" placeholder="Text to search..." className="h-full min-w-0 grow pl-1 placeholder:text-[#9c9daa]" />
        <button className="px-1 text-[#16163a]">Search</button>
      </div>
    </div>
  );
}

function MessageGrid() {
  const cell = 'border-r border-b border-[#d3d4dc] px-[3px] whitespace-nowrap';
  return (
    <div className="flex grow flex-col border border-[#9b9cab] bg-white outline outline-[#c6c7cf]">
      <table className="w-full table-fixed border-separate border-spacing-0 text-left">
        <colgroup>
          <col className="w-4" />
          <col className="w-[21px]" />
          <col className="w-5" />
          <col className="w-[30px]" />
          <col className="w-[211px]" />
          <col className="w-[173px]" />
          <col className="w-56" />
          <col />
          <col className="w-[91px]" />
          <col className="w-[81px]" />
        </colgroup>
        <thead>
          <tr className="h-[19px] bg-linear-to-b from-[#f8f8f9] to-[#eeeff2] *:font-normal">
            <th className={cell} />
            <th colSpan={2} className={cell}><Icon name="help" className="ml-[5px] size-[15px]" /></th>
            <th className={cell} />
            <th className={cell}>To</th>
            <th className={cell}>Subject</th>
            <th className={cell}>
              <span className="flex items-center justify-between pr-3">Date/Time <Caret /></span>
            </th>
            <th className={cell}>Status</th>
            <th className={cell}>Importance</th>
            <th className="border-b border-[#d3d4dc] px-[3px]">Flagged</th>
          </tr>
        </thead>
        <tbody>
          <tr className="h-[21px] bg-[#eeeff1]">
            <td className={`${cell} bg-[#f5f5f7]`}><Caret className="-rotate-90" /></td>
            <td colSpan={9} className="border-b border-[#d3d4dc] pl-[7px] font-bold">
              <span className="flex items-center gap-[9px]"><Caret className="text-[#8a8b98]" />Date: Today (Count=3)</span>
            </td>
          </tr>
          {messages.map((m) => (
            <tr key={m.to} className="h-[21px] odd:bg-[#f0f5fa] even:bg-[#f7f3fc]">
              <td className={`${cell} bg-[#f5f5f7]`} />
              <td className="border-r border-[#e3e4ea] bg-[#f8f8fa]" />
              <td className={cell}><Icon name="envelope" className="size-[15px]" /></td>
              <td className={cell} />
              <td className={cell}>{m.to}</td>
              <td className={cell}>{m.subject}</td>
              <td className={cell}>{m.date}</td>
              <td className={cell}><span className="flex items-center gap-[5px]"><Icon name="envelopePale" className="size-[15px]" />Draft</span></td>
              <td className={cell}><span className="flex items-center gap-1"><Icon name="diamond" className="-ml-0.5 size-4" />Normal</span></td>
              <td className="border-b border-[#d3d4dc] text-center">
                <input type="checkbox" aria-label={`Flag ${m.subject}`} className={`${check} align-middle`} />
              </td>
            </tr>
          ))}
        </tbody>
      </table>
      <div className="mt-auto flex h-[30px] items-center border-t border-[#c6c7cf] bg-linear-to-b from-[#ebecef] to-[#e0e1e5] pl-[298px]">
        <output className="flex h-[25px] w-[172px] items-center justify-end border border-[#c6c7cf] bg-white pr-1">3</output>
      </div>
    </div>
  );
}

function Document() {
  return (
    <main className="flex min-w-0 grow flex-col">
      <div className="flex items-center">
        <div className="relative z-10 ml-0.5 flex h-[26px] w-[171px] items-center border border-b-0 border-[#9b9cab] bg-[#ebecef] pl-[9px]">
          <Icon name="person" />
          <span className="ml-[3px] whitespace-nowrap">Winters, Edward W - Co</span>
          <button aria-label="Close tab" className="mr-[3px] ml-auto"><Icon name="thinX" /></button>
        </div>
        <button aria-label="Open documents" className="mr-2.5 ml-auto"><Caret className="text-[#77788a]" /></button>
      </div>
      <div className="-mt-px flex grow flex-col border border-[#9b9cab] px-[5px] pb-1">
        <div className="mt-[5px] flex pr-1 pl-[5px]">
          <ContactForm />
          <div className="flex w-[15px] shrink-0 items-center justify-center">
            <span className="h-4 w-[3px] bg-[repeating-linear-gradient(#a2a3b1_0_1px,#ebecef_1px_2px)]" />
          </div>
          <ContactInformation />
        </div>
        <div className="mt-2.5 mr-1 flex grow flex-col">
          <TabStrip tabs={recordTabs} active="Communications" className="ml-1" />
          <div className="flex grow flex-col gap-[3px] border border-[#9b9cab] bg-white px-1 pt-0.5 pb-1 shadow-[1px_1px_1px_#c6c7cf]">
            <Toolbar />
            <MessageGrid />
          </div>
        </div>
      </div>
    </main>
  );
}

export default function App() {
  const status = ['Client ID: PSI001000AK', 'Memory Usage: 256MB', 'Total Users: 1', 'Total Concurrent: 0', 'User: aliciag_001000'];
  return (
    <div className="flex min-h-screen flex-col rounded-lg border border-[#8f90a0] bg-[#c8c9d1] px-1 pt-px pb-1 font-['DejaVu_Sans_Condensed',Roboto,sans-serif] text-[11px] leading-[13px] text-[#20203a]">
      <Gradients />
      <TitleBar />
      <Ribbon />
      <div className="flex grow border-x border-[#a2a3b1] bg-[#ebecef] pt-[5px] pr-0.5 pb-1.5 pl-px">
        <Navigation />
        <div className="flex min-w-0 grow pl-1">
          <Document />
        </div>
      </div>
      <footer className="flex h-[23px] items-center gap-2.5 border border-[#a2a3b1] bg-linear-to-b from-[#dcdde1] to-[#c8c9cf] pb-0.5 pl-1.5">
        {status.map((s) => (
          <span key={s}>{s}</span>
        ))}
        <svg viewBox="0 0 10 10" className="mt-auto mr-0.5 ml-auto size-2.5">
          <path d="M0 10L10 0M4 10l6-6M7.500 10L10 7.500" stroke="#85869a" />
        </svg>
      </footer>
    </div>
  );
}
